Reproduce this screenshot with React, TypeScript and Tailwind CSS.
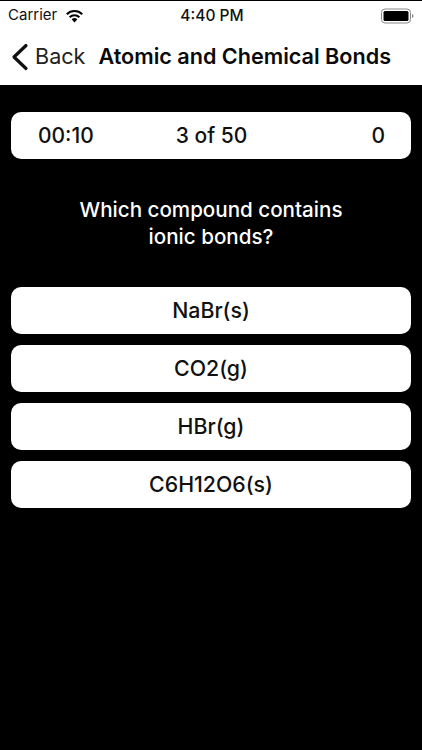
export default function App() {
  const font = "[font-family:Inter,'Liberation_Sans',sans-serif]";
  return (
    <div className={`w-[422px] h-[750px] bg-black flex flex-col overflow-hidden ${font}`}>
      <div className="bg-white h-[84px] mt-px flex flex-col shrink-0">
        <div className="h-[29px] pl-[8px] pr-[8px] relative flex items-center justify-between text-[15px] text-[#111]">
          <div className="flex items-center gap-[8px]">
            <span>Carrier</span>
            <svg width="19" height="14" viewBox="0 0 19 14">
              <path d="M9.5 13.5 L6.6 10.3 A4.2 4.2 0 0 1 12.4 10.3 Z" fill="#000" />
              <path d="M4.6 8.2 A7 7 0 0 1 14.4 8.2" stroke="#000" strokeWidth="2" fill="none" />
              <path d="M1.8 5.2 A11 11 0 0 1 17.2 5.2" stroke="#000" strokeWidth="2" fill="none" />
            </svg>
          </div>
          <span className="absolute left-[2px] right-0 text-center text-[15.5px] font-medium">4:40 PM</span>
          <svg width="33" height="16" viewBox="0 0 33 16">
            <rect x="0.5" y="1" width="29" height="14" rx="3.5" fill="none" stroke="#888" />
            <rect x="2.5" y="3" width="25" height="10" rx="1.5" fill="#000" />
            <path d="M31 6 q1.5 .5 1.5 2 t-1.5 2 Z" fill="#888" />
          </svg>
        </div>
        <div className="flex-1 flex items-center pl-[10px] pb-[2px]">
          <svg width="20" height="28" viewBox="0 0 20 28" className="shrink-0">
            <path d="M16 2.5 L4 14 L16 25.5" stroke="#111" strokeWidth="3.2" fill="none" strokeLinecap="round" strokeLinejoin="round" />
          </svg>
          <span className="ml-[5px] text-[21.6px] text-[#222]">Back</span>
          <span className="ml-[13px] text-[21.6px] font-semibold text-[#0a0a0a] whitespace-nowrap">Atomic and Chemical Bonds</span>
        </div>
      </div>
      <div className="px-[11px] pt-[27px] flex flex-col">
        <div className="h-[47px] bg-white rounded-[10px] grid grid-cols-3 items-center pl-[27px] pr-[26px] text-[21px] font-medium text-[#111]">
          <span>00:10</span>
          <span className="text-center whitespace-nowrap">3 of 50</span>
          <span className="text-right">0</span>
        </div>
        <p className="mt-[37px] text-center text-white text-[20.6px] font-medium leading-[27px]">
          Which compound contains
          <br />
          ionic bonds?
        </p>
        <div className="mt-[37px] flex flex-col gap-[11px]">
          {["NaBr(s)", "CO2(g)", "HBr(g)", "C6H12O6(s)"].map((t) => (
            <div key={t} className="h-[47px] bg-white rounded-[10px] flex items-center justify-center text-[21.3px] font-medium text-[#111]">
              {t}
            </div>
          ))}
        </div>
      </div>
    </div>
  );
}
